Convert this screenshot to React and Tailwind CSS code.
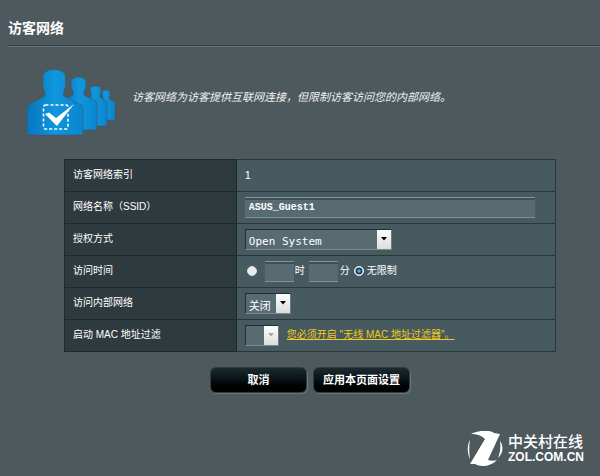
import React from "react";

const cell = "border h-8 p-0 text-left align-middle font-normal";

function Row({ id, label, children }) {
  return (
    <tr>
      <th scope="row" className={`${cell} w-[35%] border-[#1f292d] bg-[#2f3a3e]`}>
        <label htmlFor={id} className="block pb-0.5 pl-2">{label}</label>
      </th>
      <td className={`${cell} border-[#2a363a] bg-[#475a5f]`}>
        <div className="flex items-center pb-px pl-2">{children}</div>
      </td>
    </tr>
  );
}

function Select({ id, options, size, arrow, disabled }) {
  return (
    <div className={`relative h-[21px] ${size}`}>
      <select
        id={id}
        disabled={disabled}
        className="block h-full w-full appearance-none rounded-none border border-t-[#232e32] border-l-[#232e32] border-r-[#6b7b80] border-b-[#7d8c90] bg-[#576b71] pt-1 pl-[3px] text-white outline-none"
      >
        {options.map((o) => (
          <option key={o}>{o}</option>
        ))}
      </select>
      <span
        className={`pointer-events-none absolute top-px right-px bottom-px flex w-[14px] items-center justify-center bg-linear-to-b from-white to-[#dcdcdc] ${arrow}`}
      >
        <svg viewBox="0 0 6 4" className="h-1 w-1.5" fill="currentColor" aria-hidden="true">
          <path d="M0 0h6L3 3.6z" />
        </svg>
      </span>
    </div>
  );
}

const field =
  "h-[21px] rounded-none border-t border-b border-t-[#82949a] border-b-[#7f9298] bg-[#576b71] text-white outline-none shadow-[inset_0_2px_0_#3f4f54]";

function Radio({ id, defaultChecked }) {
  return (
    <input
      id={id}
      type="radio"
      name="access"
      defaultChecked={defaultChecked}
      className="h-[10px] w-[10px] appearance-none rounded-full border border-[#d5dbdd] bg-[#e9ecec] checked:border-[#e8f0f4] checked:bg-[radial-gradient(circle,#7fd0f5_0,#1d5f8c_2px,#16303f_3px,#dfe9ee_4px)]"
    />
  );
}

function GuestsIcon() {
  return (
    <svg viewBox="0 0 90 68" className="h-[68px] w-[90px] shrink-0" aria-hidden="true">
      <defs>
        <linearGradient id="blue" x1="0" x2="1" y1="0" y2="0">
          <stop offset="0" stopColor="#0874c0" />
          <stop offset="0.5" stopColor="#0f97dd" />
          <stop offset="1" stopColor="#0a84cf" />
        </linearGradient>
      </defs>
      <g fill="url(#blue)" stroke="#3a5a6a" strokeWidth="0.6">
        <path d="M70 51V34l7-4v-2c-1-1-1-3-1-4 0-2 2-3 4-3s4 1 4 3c0 1 0 3-1 4v2l6 3v18z" />
        <path d="M56 57V33l9-5v-3c-1-1-1-3-1-5 0-2 2-3 5.500-3s5.500 1 5.500 3c0 2 0 4-1 5v3l7 5v24z" />
        <path d="M36 61V32l11-6v-4c-2-2-2-4-2-8s3-6 7.500-6 7.500 2 7.500 6 0 6-2 8v4l13 7v28z" />
        <path d="M1 66V37l18-10v-4c-2-2-2-4-2-7V8c0-5 5-7.500 11-7.500S39.500 3 39.500 8v8c0 3-1 5-2 7v4L57 37v29z" />
      </g>
      <rect x="17.500" y="36" width="24.500" height="24" rx="2" fill="none" stroke="#fff" strokeWidth="1.600" strokeDasharray="3 2" />
      <path d="M19 45l4-1.500 7 5.500 18-14-17 22z" fill="#fff" />
    </svg>
  );
}

function ZolMark() {
  return (
    <svg viewBox="0 0 37 36" className="h-9 w-[37px] shrink-0" aria-hidden="true">
      <g fill="#fff">
        <path d="M4 3C9 0 22-2 27 2l6 1-12 26c3 1 6 1 9 0-4 4-9 6-14 6-3 0-6-1-8-2H3L18 8C14 4 9 3 4 3z" />
        <path d="M3 9C0 14 0 22 3 28 2 22 2 15 3 9zM33 10c1 6 0 12-2 17 5-4 6-12 2-17z" />
      </g>
    </svg>
  );
}

const action =
  "h-[26px] w-[97px] rounded-md border border-[#2f3d41] bg-linear-to-b from-[#1c2b30] via-[#081114] to-black text-[11px] font-bold text-white shadow-[1px_1px_1px_#6b787c]";

export default function App() {
  return (
    <main className="flex min-h-screen flex-col bg-[#4d595d] pt-[18px] pl-2 font-['Liberation_Sans','Noto_Sans_CJK_SC',sans-serif] text-[10px] text-white">
      <h1 className="border-b border-[#68777c] pb-2 text-sm leading-5 font-bold shadow-[inset_0_-1px_0_#333f43]">
        访客网络
      </h1>

      <section className="flex items-start gap-4 pt-[22px] pl-[18px]">
        <GuestsIcon />
        <p className="pt-5 text-[11px] leading-4 text-[#f0f2f2] italic">
          访客网络为访客提供互联网连接，但限制访客访问您的内部网络。
        </p>
      </section>

      <form onSubmit={(e) => e.preventDefault()} className="pt-[22px] pr-11 pl-14">
        <table className="w-full table-fixed border-collapse leading-4">
          <tbody>
            <Row label="访客网络索引">
              <span className="text-[11px]">1</span>
            </Row>
            <Row id="ssid" label="网络名称（SSID）">
              <input
                id="ssid"
                type="text"
                defaultValue="ASUS_Guest1"
                className={`${field} mr-5 min-w-0 flex-1 px-1 font-['Liberation_Mono',monospace] leading-4 font-bold`}
              />
            </Row>
            <Row id="auth" label="授权方式">
              <Select
                id="auth"
                options={["Open System"]}
                size="w-[147px] font-['DejaVu_Sans_Mono',monospace] text-[11px]"
                arrow="text-black"
              />
            </Row>
            <Row id="limited" label="访问时间">
              <div className="flex items-center pl-[2px]">
                <Radio id="limited" />
                <input id="hours" type="text" className={`${field} ml-2 w-[29px]`} />
                <label htmlFor="hours" className="pl-px">时</label>
                <input id="minutes" type="text" className={`${field} ml-1 w-[29px]`} />
                <label htmlFor="minutes" className="px-1 pl-[2px]">分</label>
                <Radio id="unlimited" defaultChecked />
                <label htmlFor="unlimited" className="pl-[3px]">无限制</label>
              </div>
            </Row>
            <Row id="intranet" label="访问内部网络">
              <Select id="intranet" options={["关闭"]} size="w-[46px] text-[11px]" arrow="text-black" />
            </Row>
            <Row id="mac" label="启动 MAC 地址过滤">
              <Select id="mac" options={[""]} size="w-[34px]" arrow="text-[#a5a5a5]" disabled />
              <a href="#mac-filter" className="pl-2 text-[#f0cb1c] underline">
                您必须开启 "无线 MAC 地址过滤器"。
              </a>
            </Row>
          </tbody>
        </table>
        <div className="flex justify-center gap-[6px] pt-[15px]">
          <button type="button" className={action}>取消</button>
          <button type="submit" className={action}>应用本页面设置</button>
        </div>
      </form>

      <footer className="mt-auto flex items-center justify-end gap-1 pr-4 pb-[9px]">
        <ZolMark />
        <div>
          <div className="text-[15px] leading-4 font-medium">中关村在线</div>
          <div className="text-xs leading-[14px] font-bold">ZOL.COM.CN</div>
        </div>
      </footer>
    </main>
  );
}
